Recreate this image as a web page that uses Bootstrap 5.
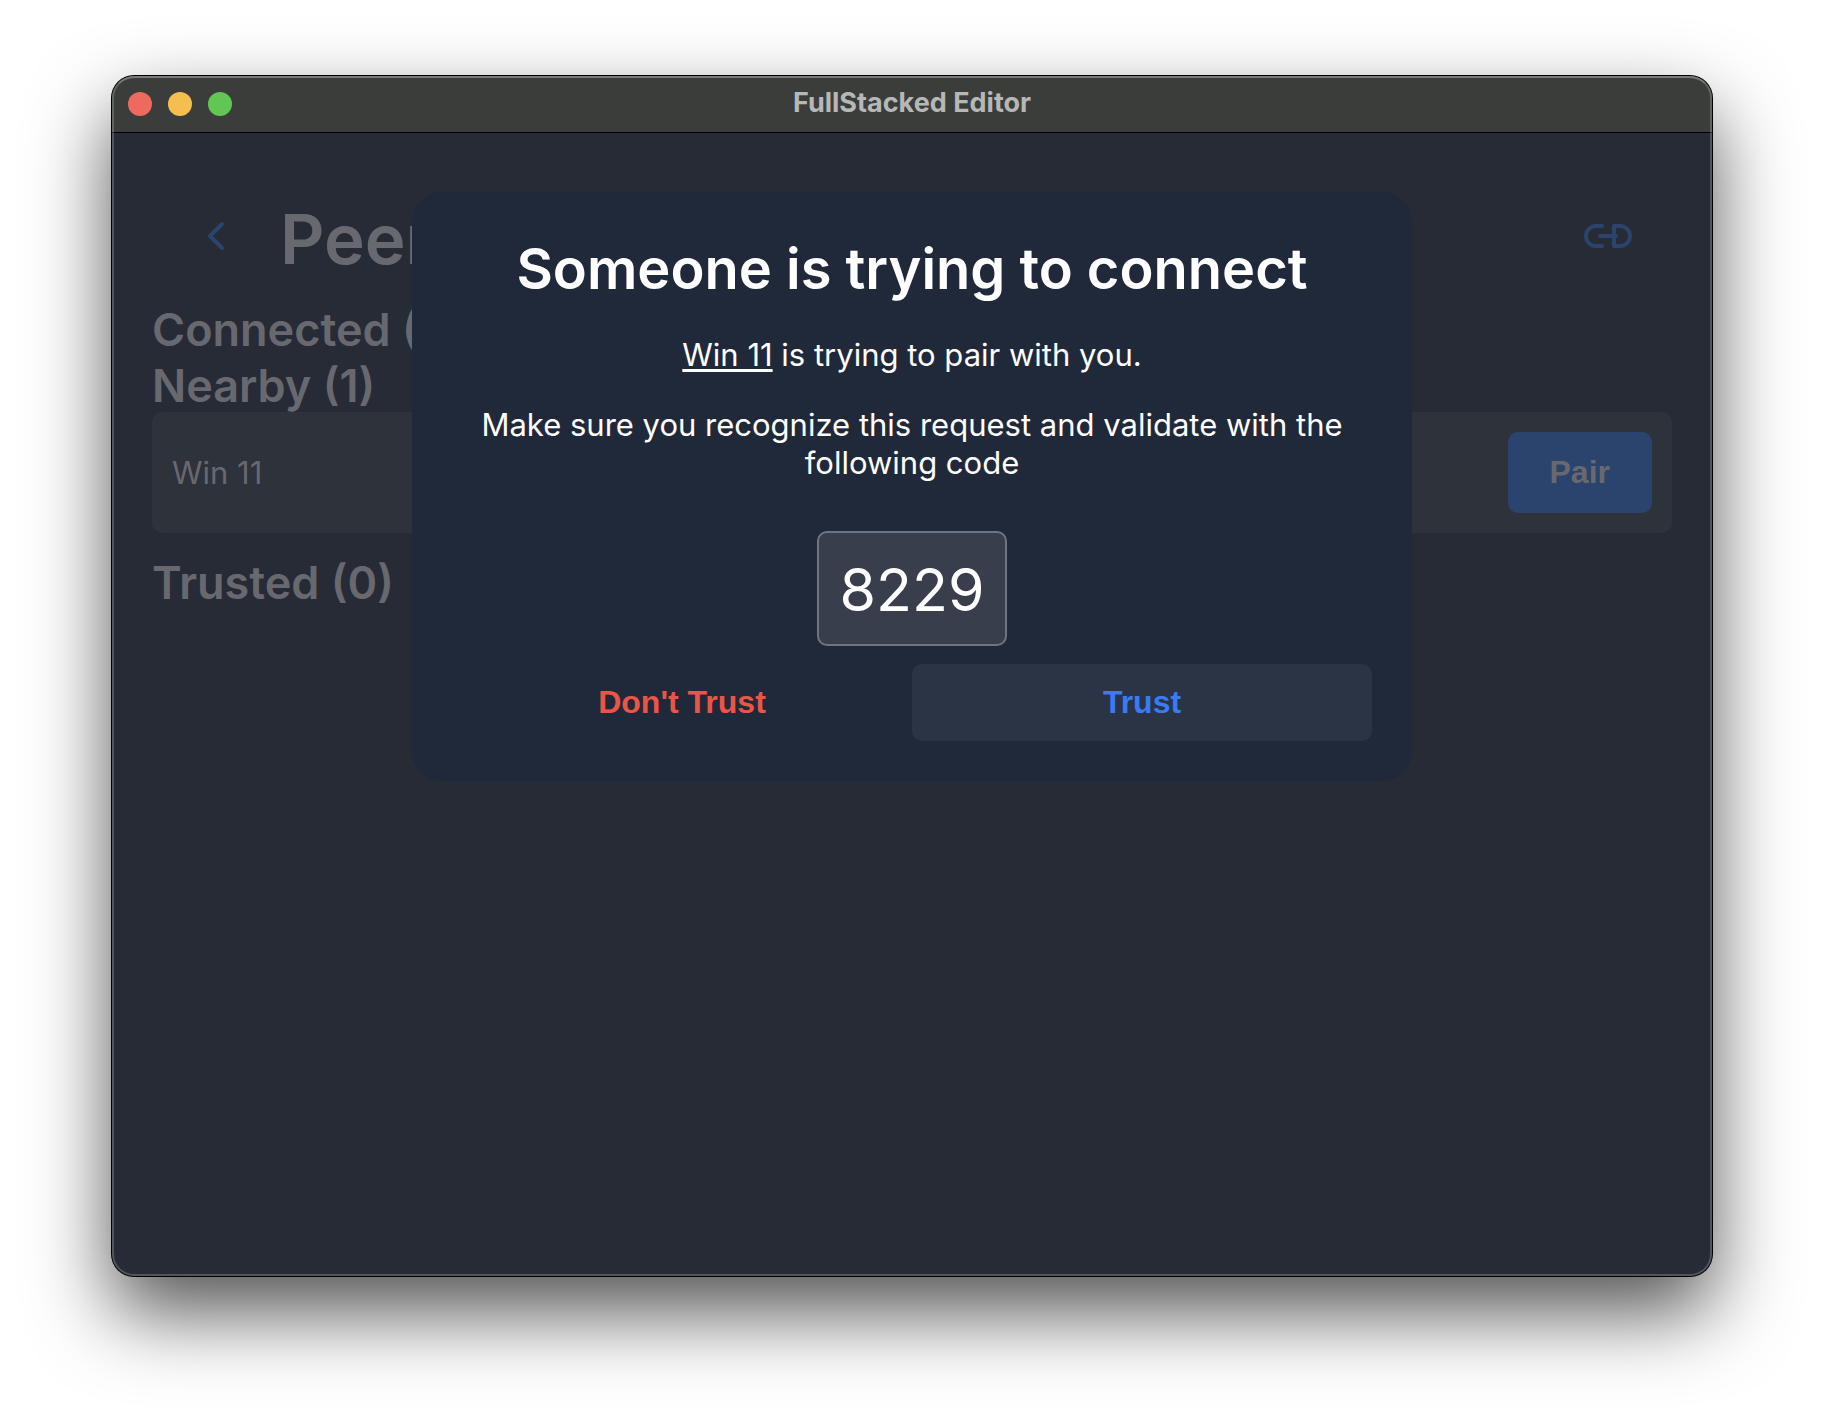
<!DOCTYPE html>
<html lang="en">
<head>
<meta charset="utf-8">
<meta name="viewport" content="width=device-width, initial-scale=1">
<title>FullStacked Editor</title>
<link href="https://cdn.jsdelivr.net/npm/bootstrap@5.3.0/dist/css/bootstrap.min.css" rel="stylesheet">
<style>
  body { background: #fff; font-family: Inter, "Liberation Sans", sans-serif; font-size: 31px; line-height: 38px; padding: 76px 112px 148px; }
  .app-window { background: #272b35; border-radius: 22px; box-shadow: 0 0 0 1px #000, 0 36px 80px rgba(0,0,0,.68); color: #68696f; }
  /* light rim drawn just inside the window edge */
  .app-window::after { content: ""; position: absolute; inset: 0; border: 2px solid rgba(255,255,255,.2); border-top-color: rgba(255,255,255,.32); border-radius: 22px; pointer-events: none; }
  .title-bar { background: #3b3d3b; border-bottom: 1px solid #000; border-radius: 22px 22px 0 0; height: 57px; padding: 0 16px; }
  .title-bar h1 { font-size: 27px; line-height: 32px; font-weight: 700; color: #b6b8b7; padding-bottom: 2px; }
  .light { width: 24px; height: 24px; border: 0; border-radius: 50%; padding: 0; }
  .light-close { background: #ed6a5e; }
  .light-min { background: #f5bf4f; }
  .light-zoom { background: #62c655; }
  .lights { gap: 16px; }
  .page-body { padding: 60px 40px 40px; }
  .page-head { padding: 0 20px; margin-bottom: 14px; }
  .page-head h2 { font-size: 69px; line-height: 93px; font-weight: 600; margin-left: 20px; }
  .icon-btn { color: #2b446d; border: 0; height: 86px; width: 88px; padding: 0; }
  .peer-title { font-size: 45px; line-height: 53px; padding-top: 3px; font-weight: 600; }
  .peer-item { background: #2e323a; border-radius: 10px; padding: 20px; margin-bottom: 20px; }
  .act { font-family: "Liberation Sans", Arial, sans-serif; font-weight: 700; font-size: 32px; line-height: 37px; border: 0; border-radius: 10px; padding: 20px; }
  .act-pair { background: #2b446d; color: #68696f; padding: 22px 42px; }
  .pair-layer { inset: 57px 0 0; padding: 59px 20px; }
  .pair-box { background: #20293a; border-radius: 30px; color: #fff; padding: 40px; width: 1000px; }
  .pair-box h2 { font-size: 56px; line-height: 74px; font-weight: 600; margin-bottom: 30px; }
  .pair-box p { margin-bottom: 32px; }
  .peer-name { text-decoration-thickness: 3px; text-underline-offset: 3px; }
  .pair-code { background: #393e4d; border: 2px solid #6f7580; border-radius: 10px; font-size: 59px; line-height: 71px; padding: 21px 20px 19px; margin: 17px 0 18px; }
  .act-deny { color: #ec5545; }
  .act-trust { background: #2b3445; color: #377cf3; }
</style>
</head>
<body class="min-vh-100 d-flex">
<main class="app-window position-relative flex-fill d-flex flex-column">
  <header class="title-bar position-relative d-flex align-items-center">
    <div class="lights d-flex">
      <button class="light light-close" type="button" aria-label="Close"></button>
      <button class="light light-min" type="button" aria-label="Minimize"></button>
      <button class="light light-zoom" type="button" aria-label="Zoom"></button>
    </div>
    <h1 class="position-absolute start-50 translate-middle-x m-0 text-nowrap">FullStacked Editor</h1>
  </header>

  <section class="page-body flex-fill">
    <div class="page-head d-flex align-items-start">
      <button class="btn icon-btn d-flex align-items-center justify-content-center" type="button" aria-label="Back">
        <svg width="32" height="32" viewBox="0 0 32 32" fill="none" stroke="currentColor" stroke-width="4" stroke-linecap="round" stroke-linejoin="round"><path d="M22 4 10 16 22 28"/></svg>
      </button>
      <h2 class="mb-0">Peers</h2>
      <button class="btn icon-btn ms-auto d-flex align-items-center justify-content-center" type="button" aria-label="Connect by link">
        <svg width="48" height="24" viewBox="0 0 48 24" fill="none" stroke="currentColor" stroke-width="4" stroke-linecap="round" stroke-linejoin="round"><path d="M18 2H12a10 10 0 0 0 0 20H18M16 12H32M30 2H36a10 10 0 0 1 0 20H30Z"/></svg>
      </button>
    </div>
    <h3 class="peer-title mb-0">Connected (0)</h3>
    <h3 class="peer-title mb-0">Nearby (1)</h3>
    <div class="peer-item d-flex align-items-center justify-content-between">
      <span>Win 11</span>
      <button class="btn act act-pair" type="button">Pair</button>
    </div>
    <h3 class="peer-title mb-0">Trusted (0)</h3>
  </section>

  <div class="pair-layer position-absolute d-flex justify-content-center align-items-start">
    <div class="pair-box d-flex flex-column align-items-center text-center" role="dialog" aria-labelledby="pairTitle">
      <h2 id="pairTitle">Someone is trying to connect</h2>
      <p><u class="peer-name">Win 11</u> is trying to pair with you.</p>
      <p>Make sure you recognize this request and validate with the following code</p>
      <div class="pair-code">8229</div>
      <div class="row g-0 w-100">
        <div class="col-6"><button class="btn act act-deny w-100" type="button">Don't Trust</button></div>
        <div class="col-6"><button class="btn act act-trust w-100" type="button">Trust</button></div>
      </div>
    </div>
  </div>
</main>
<script src="https://cdn.jsdelivr.net/npm/bootstrap@5.3.0/dist/js/bootstrap.bundle.min.js"></script>
</body>
</html>
